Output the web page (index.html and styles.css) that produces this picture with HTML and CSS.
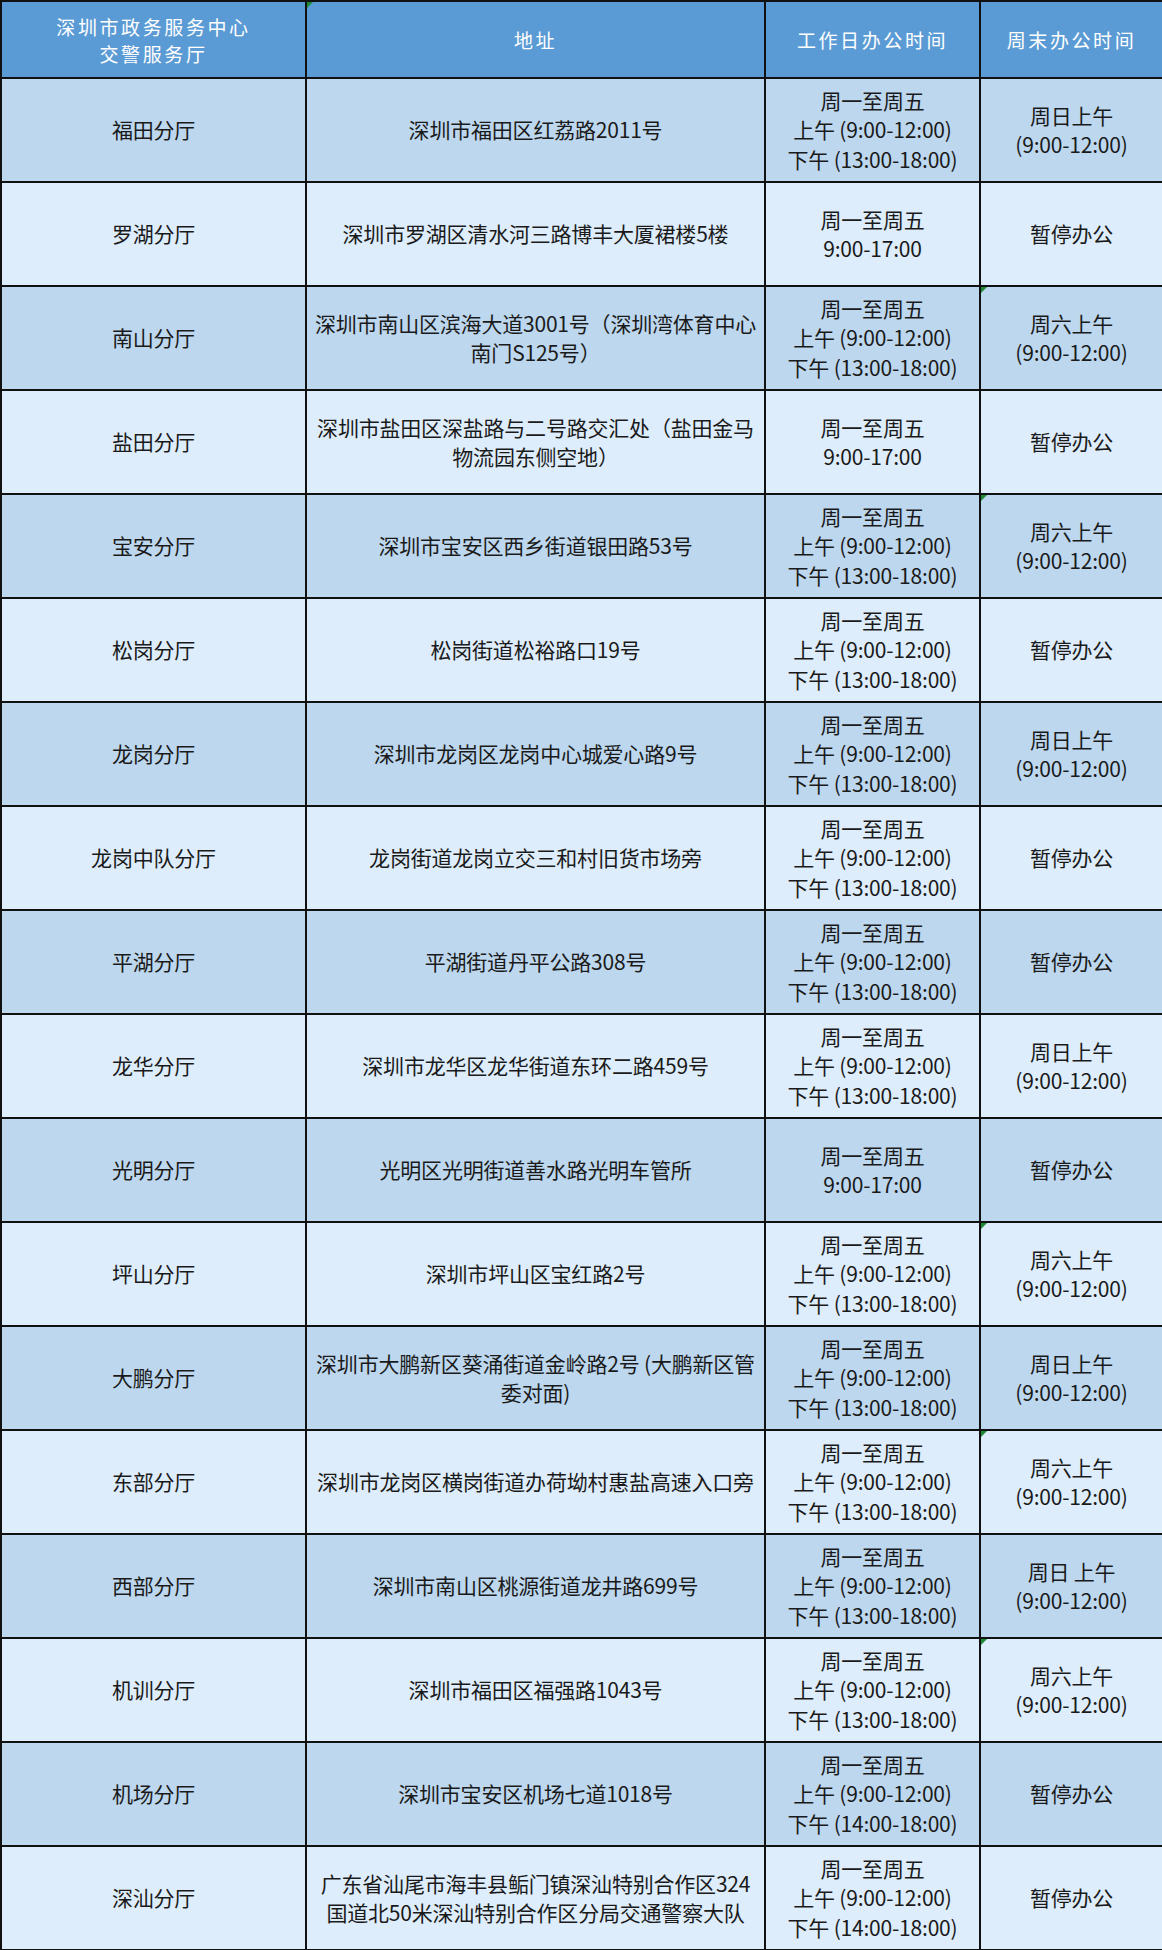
FILE: index.html
```html
<!DOCTYPE html>
<html lang="zh-CN">
<head>
<meta charset="utf-8">
<title>深圳市政务服务中心交警服务厅</title>
<link rel="stylesheet" href="styles.css">
</head>
<body>
<table class="hall-table">
  <colgroup>
    <col class="c-name">
    <col class="c-addr">
    <col class="c-work">
    <col class="c-week">
  </colgroup>
  <thead>
    <tr class="head-row">
      <th>深圳市政务服务中心<br>交警服务厅</th>
      <th class="flag">地址</th>
      <th>工作日办公时间</th>
      <th>周末办公时间</th>
    </tr>
  </thead>
  <tbody>
    <tr class="odd">
      <td>福田分厅</td>
      <td>深圳市福田区红荔路2011号</td>
      <td>周一至周五<br>上午 (9:00-12:00)<br>下午 (13:00-18:00)</td>
      <td>周日上午<br>(9:00-12:00)</td>
    </tr>
    <tr class="even">
      <td>罗湖分厅</td>
      <td>深圳市罗湖区清水河三路博丰大厦裙楼5楼</td>
      <td>周一至周五<br>9:00-17:00</td>
      <td>暂停办公</td>
    </tr>
    <tr class="odd">
      <td>南山分厅</td>
      <td>深圳市南山区滨海大道3001号（深圳湾体育中心<br>南门S125号）</td>
      <td>周一至周五<br>上午 (9:00-12:00)<br>下午 (13:00-18:00)</td>
      <td class="flag">周六上午<br>(9:00-12:00)</td>
    </tr>
    <tr class="even">
      <td>盐田分厅</td>
      <td>深圳市盐田区深盐路与二号路交汇处（盐田金马<br>物流园东侧空地）</td>
      <td>周一至周五<br>9:00-17:00</td>
      <td>暂停办公</td>
    </tr>
    <tr class="odd">
      <td>宝安分厅</td>
      <td>深圳市宝安区西乡街道银田路53号</td>
      <td>周一至周五<br>上午 (9:00-12:00)<br>下午 (13:00-18:00)</td>
      <td class="flag">周六上午<br>(9:00-12:00)</td>
    </tr>
    <tr class="even">
      <td>松岗分厅</td>
      <td>松岗街道松裕路口19号</td>
      <td>周一至周五<br>上午 (9:00-12:00)<br>下午 (13:00-18:00)</td>
      <td>暂停办公</td>
    </tr>
    <tr class="odd">
      <td>龙岗分厅</td>
      <td>深圳市龙岗区龙岗中心城爱心路9号</td>
      <td>周一至周五<br>上午 (9:00-12:00)<br>下午 (13:00-18:00)</td>
      <td>周日上午<br>(9:00-12:00)</td>
    </tr>
    <tr class="even">
      <td>龙岗中队分厅</td>
      <td>龙岗街道龙岗立交三和村旧货市场旁</td>
      <td>周一至周五<br>上午 (9:00-12:00)<br>下午 (13:00-18:00)</td>
      <td>暂停办公</td>
    </tr>
    <tr class="odd">
      <td>平湖分厅</td>
      <td>平湖街道丹平公路308号</td>
      <td>周一至周五<br>上午 (9:00-12:00)<br>下午 (13:00-18:00)</td>
      <td>暂停办公</td>
    </tr>
    <tr class="even">
      <td>龙华分厅</td>
      <td>深圳市龙华区龙华街道东环二路459号</td>
      <td>周一至周五<br>上午 (9:00-12:00)<br>下午 (13:00-18:00)</td>
      <td>周日上午<br>(9:00-12:00)</td>
    </tr>
    <tr class="odd">
      <td>光明分厅</td>
      <td>光明区光明街道善水路光明车管所</td>
      <td>周一至周五<br>9:00-17:00</td>
      <td>暂停办公</td>
    </tr>
    <tr class="even">
      <td>坪山分厅</td>
      <td>深圳市坪山区宝红路2号</td>
      <td>周一至周五<br>上午 (9:00-12:00)<br>下午 (13:00-18:00)</td>
      <td class="flag">周六上午<br>(9:00-12:00)</td>
    </tr>
    <tr class="odd">
      <td>大鹏分厅</td>
      <td>深圳市大鹏新区葵涌街道金岭路2号 (大鹏新区管<br>委对面)</td>
      <td>周一至周五<br>上午 (9:00-12:00)<br>下午 (13:00-18:00)</td>
      <td>周日上午<br>(9:00-12:00)</td>
    </tr>
    <tr class="even">
      <td>东部分厅</td>
      <td>深圳市龙岗区横岗街道办荷坳村惠盐高速入口旁</td>
      <td>周一至周五<br>上午 (9:00-12:00)<br>下午 (13:00-18:00)</td>
      <td class="flag">周六上午<br>(9:00-12:00)</td>
    </tr>
    <tr class="odd">
      <td>西部分厅</td>
      <td>深圳市南山区桃源街道龙井路699号</td>
      <td>周一至周五<br>上午 (9:00-12:00)<br>下午 (13:00-18:00)</td>
      <td>周日 上午<br>(9:00-12:00)</td>
    </tr>
    <tr class="even">
      <td>机训分厅</td>
      <td>深圳市福田区福强路1043号</td>
      <td>周一至周五<br>上午 (9:00-12:00)<br>下午 (13:00-18:00)</td>
      <td class="flag">周六上午<br>(9:00-12:00)</td>
    </tr>
    <tr class="odd">
      <td>机场分厅</td>
      <td>深圳市宝安区机场七道1018号</td>
      <td>周一至周五<br>上午 (9:00-12:00)<br>下午 (14:00-18:00)</td>
      <td>暂停办公</td>
    </tr>
    <tr class="even">
      <td>深汕分厅</td>
      <td>广东省汕尾市海丰县鲘门镇深汕特别合作区324<br>国道北50米深汕特别合作区分局交通警察大队</td>
      <td>周一至周五<br>上午 (9:00-12:00)<br>下午 (14:00-18:00)</td>
      <td>暂停办公</td>
    </tr>
  </tbody>
</table>
</body>
</html>
```

FILE: styles.css
```css
html, body {
  margin: 0;
  padding: 0;
  background: #ffffff;
}

body {
  font-family: "Noto Sans CJK SC", "Noto Sans", sans-serif;
  color: #1a1a1a;
}

.hall-table {
  width: 1162px;
  border-collapse: collapse;
  table-layout: fixed;
}

.c-name { width: 305px; }
.c-addr { width: 459px; }
.c-work { width: 215px; }
.c-week { width: 183px; }

.hall-table th,
.hall-table td {
  border: 2px solid #111111;
  text-align: center;
  vertical-align: middle;
  padding: 0 2px;
  position: relative;
}

.head-row {
  height: 77px;
  background: #5b9bd5;
}

.head-row th {
  color: #ffffff;
  font-weight: 400;
  font-size: 19px;
  line-height: 27px;
  letter-spacing: 2.6px;
}

.hall-table td {
  height: 102px;
  font-size: 21px;
  line-height: 29.5px;
  letter-spacing: -0.2px;
}

.odd { background: #bdd7ee; }
.even { background: #deedfb; }

.flag::before {
  content: "";
  position: absolute;
  left: 0;
  top: 0;
  width: 0;
  height: 0;
  border-top: 6px solid #1f8a35;
  border-right: 6px solid transparent;
}
```
